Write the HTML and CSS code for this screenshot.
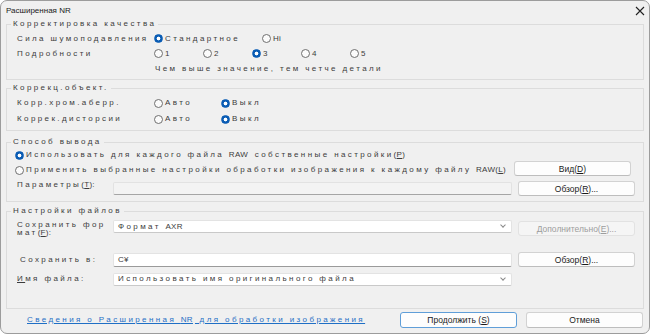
FILE: index.html
```html
<!DOCTYPE html>
<html lang="ru">
<head>
<meta charset="utf-8">
<title>Расширенная NR</title>
<link rel="stylesheet" href="styles.css">
</head>
<body>
<div class="window">
  <div class="titlebar">
    <span class="title">Расширенная NR</span>
    <svg class="close" width="10" height="10" viewBox="0 0 10 10"><path d="M1 1L9 9M9 1L1 9" stroke="#222" stroke-width="1.1" fill="none"/></svg>
  </div>

  <section class="group g1">
    <div class="legend sp">Корректировка качества</div>
    <div class="row h15">
      <span class="sp lbl w137">Сила шумоподавления</span>
      <span class="opt w108"><i class="radio on"></i><span class="sp">Стандартное</span></span>
      <span class="opt"><i class="radio"></i><span class="sp lat">Hi</span></span>
    </div>
    <div class="row h15">
      <span class="sp lbl w137">Подробности</span>
      <span class="opt w49"><i class="radio"></i><span class="sp">1</span></span>
      <span class="opt w49"><i class="radio"></i><span class="sp">2</span></span>
      <span class="opt w49"><i class="radio on"></i><span class="sp">3</span></span>
      <span class="opt w49"><i class="radio"></i><span class="sp">4</span></span>
      <span class="opt"><i class="radio"></i><span class="sp">5</span></span>
    </div>
    <div class="row h15">
      <span class="lbl w138"></span>
      <span class="sp">Чем выше значение, тем четче детали</span>
    </div>
  </section>

  <section class="group g2">
    <div class="legend sp">Коррекц.объект.</div>
    <div class="row h16">
      <span class="sp lbl w137">Корр.хром.аберр.</span>
      <span class="opt w67"><i class="radio"></i><span class="sp">Авто</span></span>
      <span class="opt"><i class="radio on"></i><span class="sp">Выкл</span></span>
    </div>
    <div class="row h16">
      <span class="sp lbl w137">Коррек.дисторсии</span>
      <span class="opt w67"><i class="radio"></i><span class="sp">Авто</span></span>
      <span class="opt"><i class="radio on"></i><span class="sp">Выкл</span></span>
    </div>
  </section>

  <section class="group g3">
    <div class="legend sp">Способ вывода</div>
    <div class="row h14 outdent">
      <span class="opt"><i class="radio on"></i><span class="sp">Использовать для каждого файла <span class="lat">RAW</span> собственные настройки<span class="lat">(<u>P</u>)</span></span></span>
    </div>
    <div class="row h15 outdent split">
      <span class="opt grow"><i class="radio"></i><span class="sp">Применить выбранные настройки обработки изображения к каждому файлу <span class="lat">RAW(<u>L</u>)</span></span></span>
      <button class="btn top0">Вид(<u>D</u>)</button>
    </div>
    <div class="row param">
      <span class="sp lbl w96">Параметры<span class="lat">(<u>T</u>):</span></span>
      <span class="field disabled"></span>
      <button class="btn top1">Обзор(<u>R</u>)...</button>
    </div>
  </section>

  <section class="group g4">
    <div class="legend sp">Настройки файлов</div>
    <div class="row frow">
      <span class="sp lbl w96 two">Сохранить фор<br>мат<span class="lat">(<u>F</u>):</span></span>
      <span class="field select s1"><span class="sp">Формат <span class="lat">AXR</span></span><i class="chev"></i></span>
      <button class="btn dis top2">Дополнительно(<u>E</u>)...</button>
    </div>
    <div class="row srow">
      <span class="sp lbl w96 ind">Сохранить в:</span>
      <span class="field input"><span class="sp lat">C¥</span></span>
      <button class="btn">Обзор(<u>R</u>)...</button>
    </div>
    <div class="row nrow">
      <span class="sp lbl w96"><u>И</u>мя файла:</span>
      <span class="field select"><span class="sp">Использовать имя оригинального файла</span><i class="chev"></i></span>
      <span class="spacer"></span>
    </div>
  </section>

  <div class="footer">
    <a class="sp link" href="#">Сведения о Расширенная <span class="lat">NR</span> для обработки изображения</a>
    <div class="actions">
      <button class="btn default">Продолжить (<u>S</u>)</button>
      <button class="btn">Отмена</button>
    </div>
  </div>
</div>
</body>
</html>
```

FILE: styles.css
```css
* { box-sizing: border-box; }
html, body { margin: 0; padding: 0; background: #ffffff; }
body { width: 650px; height: 334px; overflow: hidden; font-family: "Liberation Sans", Arial, sans-serif; }

.window {
  width: 650px;
  height: 334px;
  border: 1px solid #9c9c9c;
  border-radius: 7px;
  background: #f0f0f0;
  overflow: hidden;
}

.titlebar {
  height: 18px;
  display: flex;
  align-items: center;
  justify-content: space-between;
  padding: 2px 4px 0 5px;
}
.title { font-size: 8px; line-height: 10px; color: #1a1a1a; }
.close { display: block; }

.sp {
  font-size: 8px;
  letter-spacing: 2.4px;
  color: #3c3c3c;
  white-space: nowrap;
  line-height: 10px;
}
.lat { letter-spacing: 0.3px; margin-right: 2px; }

.group {
  display: flex;
  flex-direction: column;
  margin: 0 5px;
  border: 1px solid #dcdcdc;
  padding: 0 8px 0 10px;
}
.legend {
  align-self: flex-start;
  height: 10px;
  margin: -6px 0 0 -6px;
  padding: 0 2px;
  background: #f0f0f0;
}
.g1 { margin-top: 5px; padding-bottom: 3px; }
.g1 .legend { margin-bottom: 2px; }
.g2 { margin-top: 8px; padding-bottom: 3px; }
.g2 .legend { margin-bottom: 2px; }
.g3 { margin-top: 11px; padding-bottom: 5px; }
.g3 .legend { margin-bottom: 1px; }
.g4 { margin-top: 9px; padding-bottom: 22px; }
.g4 .legend { margin-bottom: 3px; }

.row { display: flex; align-items: center; }
.h14 { height: 14px; }
.h15 { height: 15px; }
.h16 { height: 16px; }
.outdent { margin-left: -2px; }
.split { align-items: flex-start; }
.split .opt { margin-top: 3px; }

.lbl { flex: none; }
.w137 { width: 137px; }
.w138 { width: 138px; }
.w96 { width: 96px; }
.w108 { width: 108px; }
.w49 { width: 49px; }
.w67 { width: 67px; }
.grow { flex: 1; }

.opt { display: flex; align-items: center; flex: none; }
.opt > .sp { margin-left: 2px; }

.radio {
  display: block;
  width: 9px;
  height: 9px;
  border-radius: 50%;
  border: 1px solid #6f6f6f;
  background: #fbfbfb;
  flex: none;
}
.radio.on {
  border-color: #0a5cb4;
  background: radial-gradient(circle, #ffffff 0 1.6px, #0a5cb4 2.2px);
}

.btn {
  width: 117px;
  height: 15px;
  flex: none;
  margin: 0 0 0 6px;
  padding: 0;
  border: 1px solid #d2d2d2;
  border-bottom-color: #bdbdbd;
  border-radius: 3px;
  background: #fdfdfd;
  font-family: "Liberation Sans", Arial, sans-serif;
  font-size: 8.5px;
  color: #1b1b1b;
  line-height: 12px;
}
.btn.top0 { margin-top: -1px; }
.btn.top1 { margin-top: 1px; }
.btn.top2 { margin-top: 2px; }
.btn.dis { background: #f5f5f5; color: #9d9d9d; border-color: #e2e2e2; }
.btn.default { border-color: #5f9ed8; margin-left: 0; }

.field {
  flex: 1;
  display: flex;
  align-items: center;
  height: 13px;
  padding: 0 4px;
  background: #ffffff;
  border: 1px solid #e3e3e3;
  border-bottom-color: #9a9a9a;
  border-radius: 2px;
}
.field.disabled { background: #f3f3f3; border-color: #e2e2e2; border-bottom-color: #a5a5a5; }
.field.select { height: 13px; border-bottom-color: #c9c9c9; }
.field.select > .sp { flex: 1; }
.chev {
  width: 4px;
  height: 4px;
  border-right: 1px solid #8a8a8a;
  border-bottom: 1px solid #8a8a8a;
  transform: rotate(45deg);
  margin: -3px 2px 0 0;
}

.param { align-items: flex-start; height: 16px; margin-top: 3px; }
.param .lbl { line-height: 10px; }
.param .field { margin-top: 2px; }

.frow { align-items: flex-start; height: 18px; }
.two { line-height: 8px; padding-top: 2px; white-space: normal; }
.s1 { margin-top: 1px; }
.srow { height: 15px; margin-top: 15px; }
.srow .field { height: 14px; }
.srow .btn { height: 15px; }
.ind { padding-left: 3px; }
.nrow { height: 14px; margin-top: 5px; }
.spacer { width: 123px; flex: none; }

.footer {
  display: flex;
  align-items: center;
  justify-content: space-between;
  margin-top: 3px;
  padding: 0 6px 0 26px;
  height: 16px;
}
.link { color: #1f6fc5; text-decoration: underline; }
.actions { display: flex; gap: 9px; }
.actions .btn { margin: 0; height: 16px; }
```
